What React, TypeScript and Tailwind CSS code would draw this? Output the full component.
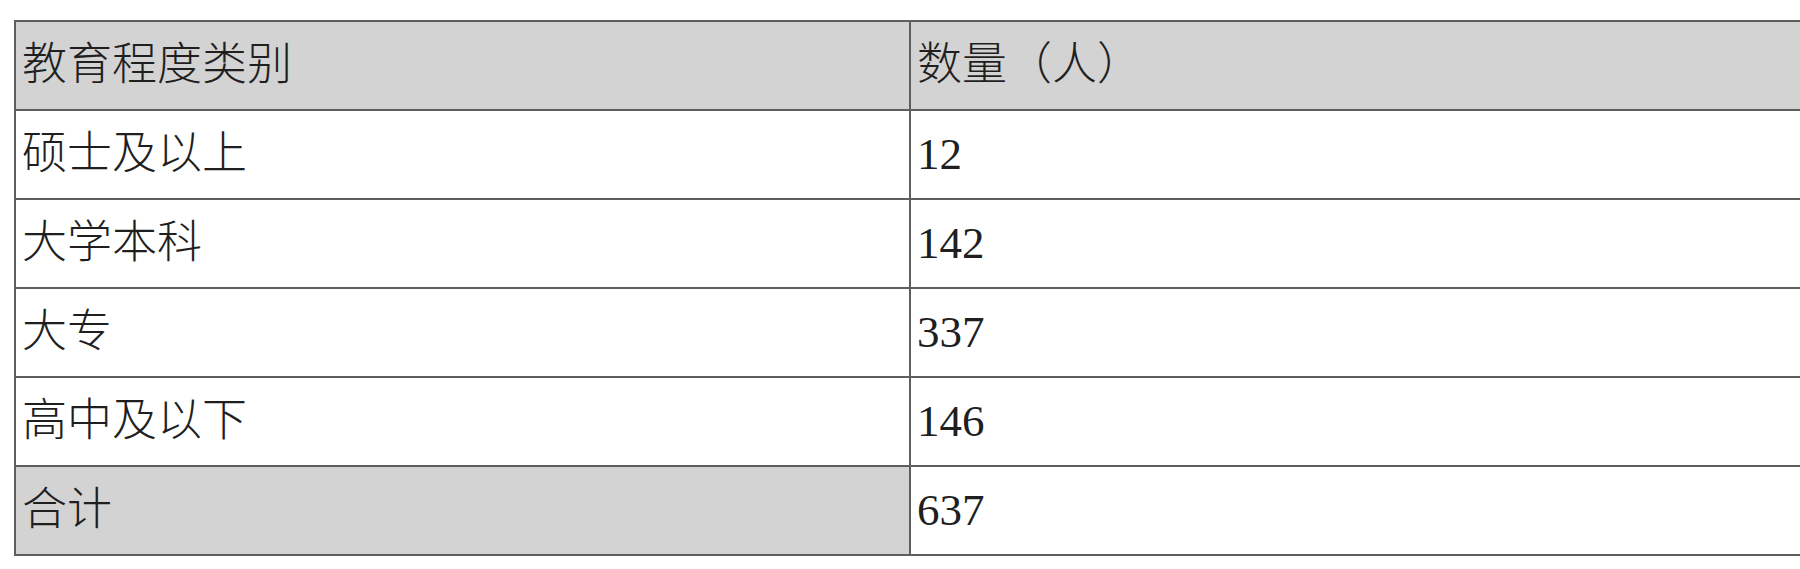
import React from "react";

const rows: { label: string; value: string; shaded?: boolean; labelShaded?: boolean }[] = [
  { label: "教育程度类别", value: "数量（人）", shaded: true },
  { label: "硕士及以上", value: "12" },
  { label: "大学本科", value: "142" },
  { label: "大专", value: "337" },
  { label: "高中及以下", value: "146" },
  { label: "合计", value: "637", labelShaded: true },
];

export default function App() {
  return (
    <div
      className="w-full h-[569px] overflow-hidden bg-white text-[#1f1f1f]"
      style={{ fontFamily: '"Liberation Serif", "Noto Sans CJK SC", serif' }}
    >
      <div className="mt-[20px] ml-[14px] w-[1840px] border-t-2 border-l-2 border-[#5e5e5e]">
        {rows.map((r, i) => (
          <div
            key={i}
            className={`flex h-[89px] border-b-2 border-[#5e5e5e] ${r.shaded ? "bg-[#d3d3d3]" : "bg-white"}`}
          >
            <div
              className={`w-[895px] shrink-0 border-r-2 border-[#5e5e5e] flex items-center pl-[6px] text-[45px] leading-none font-light ${
                r.labelShaded ? "bg-[#d3d3d3]" : ""
              }`}
            >
              {r.label}
            </div>
            <div className="flex-1 flex items-center pl-[6px] text-[45px] leading-none font-light">{r.value}</div>
          </div>
        ))}
      </div>
    </div>
  );
}
